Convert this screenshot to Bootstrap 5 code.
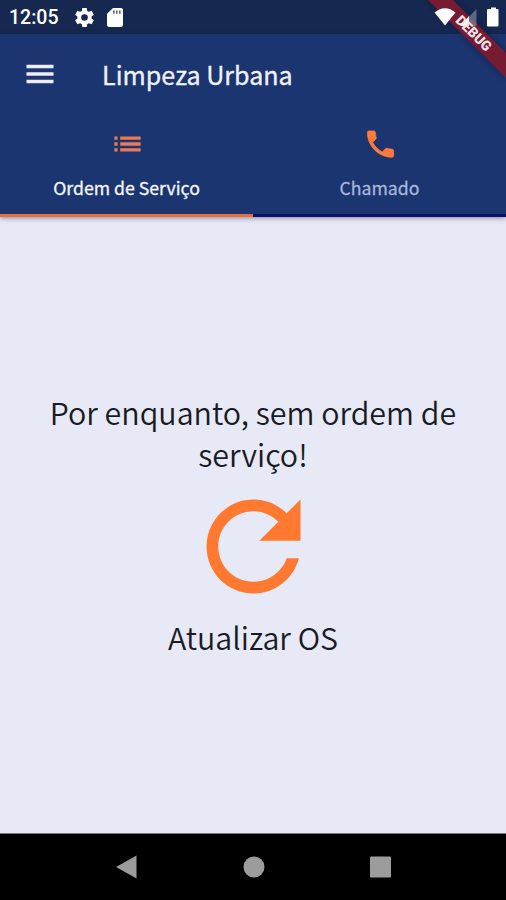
<!DOCTYPE html>
<html lang="pt-BR">
<head>
<meta charset="utf-8">
<meta name="viewport" content="width=device-width, initial-scale=1">
<title>Limpeza Urbana</title>
<link href="https://cdn.jsdelivr.net/npm/bootstrap@5.3.0/dist/css/bootstrap.min.css" rel="stylesheet">
<style>
body{font-family:"Noto Sans CJK SC","Noto Sans",sans-serif;background:#e7e9f6;color:#191b24;height:900px}
svg{display:block;flex:none}
.status-bar{height:34px;background:#162850;font-family:Roboto,sans-serif;padding-left:9px;padding-right:7px}
.clock{font-size:19.5px;font-weight:500;line-height:34px;width:66px;padding-top:2px}
.card-icon{margin-left:13px}
.app-head{background:#1b3570;height:182px;box-shadow:0 2px 5px rgba(30,35,70,.5);z-index:1}
.app-bar{height:80px;padding-left:22px}
.app-title{font-size:25.1px;font-weight:400;line-height:36px;margin-left:44px;padding-bottom:1px;color:#f0f2fc;-webkit-text-stroke:.3px #f0f2fc}
.tab-item{height:103px;color:#a9b5d9;font-size:17.7px;line-height:26px;border-bottom:3px solid #10106a;padding-top:12px;font-weight:400;-webkit-text-stroke:.3px currentColor}
.tab-item.current{color:#f4f5fe;border-bottom-color:#e97032}
.tab-item svg{margin-left:1px}
.tab-item span{margin-top:13px}
.notice{font-size:30.4px;line-height:42px;font-weight:350}
.content-area{padding-top:175px}
.refresh-icon{margin-top:1px;margin-bottom:-1px}
.nav-keys{height:67px;background:#000;border-top:1px solid #777;padding:0 61.500px}
.debug-ribbon{top:0;right:0;width:86px;height:86px;z-index:3}
</style>
</head>
<body class="d-flex flex-column overflow-hidden position-relative">
<div class="status-bar d-flex align-items-center text-white">
  <div class="clock">12:05</div>
  <svg width="19" height="19" viewBox="2 2 20 20" fill="#fff"><path d="M19.43 12.98c.04-.32.07-.64.07-.98s-.03-.66-.07-.98l2.11-1.65c.19-.15.24-.42.12-.64l-2-3.46c-.12-.22-.39-.3-.61-.22l-2.49 1c-.52-.4-1.08-.73-1.69-.98l-.38-2.65C14.46 2.18 14.25 2 14 2h-4c-.25 0-.46.18-.49.42l-.38 2.65c-.61.25-1.17.59-1.69.98l-2.49-1c-.23-.09-.49 0-.61.22l-2 3.46c-.13.22-.07.49.12.64l2.11 1.65c-.04.32-.07.65-.07.98s.03.66.07.98l-2.11 1.65c-.19.15-.24.42-.12.64l2 3.46c.12.22.39.3.61.22l2.49-1c.52.4 1.08.73 1.69.98l.38 2.65c.03.24.24.42.49.42h4c.25 0 .46-.18.49-.42l.38-2.65c.61-.25 1.17-.59 1.69-.98l2.49 1c.23.09.49 0 .61-.22l2-3.46c.12-.22.07-.49-.12-.64zM12 15.5A3.5 3.5 0 1 1 12 8.500a3.500 3.500 0 0 1 0 7z"/></svg>
  <svg class="card-icon" width="16" height="19" viewBox="4 2 16 20" preserveAspectRatio="none" fill="#fff"><path d="M18 2h-8L4 8v12c0 1.100.9 2 2 2h12c1.100 0 2-.9 2-2V4c0-1.100-.9-2-2-2z"/><path d="M10 4.500h1.600v3.500H10zM13 4.500h1.600v3.500H13zM16 4.500h1.600v3.500H16z" fill="#586583"/></svg>
</div>
<header class="app-head position-relative">
  <div class="app-bar d-flex align-items-center">
    <svg width="36" height="36" viewBox="0 0 24 24" fill="#eeecf8"><path d="M3 18.200h18v-2.400H3zM3 13.200h18v-2.400H3zM3 5.800v2.400h18V5.800z"/></svg>
    <div class="app-title">Limpeza Urbana</div>
  </div>
  <div class="row g-0 text-center">
    <div class="col-6 tab-item current d-flex flex-column align-items-center">
      <svg width="35" height="35" viewBox="0 0 24 24" fill="#e87c55"><path d="M3 13.500h2.200v-2.300H3zM3 17.500h2.200v-2.300H3zM3 9.500h2.200V7.200H3zM7 13.500h14v-2.300H7zM7 17.500h14v-2.300H7zM7 7.200v2.300h14V7.200z"/></svg>
      <span>Ordem de Serviço</span>
    </div>
    <div class="col-6 tab-item d-flex flex-column align-items-center">
      <svg width="35" height="35" viewBox="0 -.4 24 24" fill="#ff793b"><path d="M6.620 10.790c1.440 2.830 3.760 5.140 6.590 6.590l2.200-2.200c.27-.27.67-.36 1.020-.24 1.120.37 2.330.57 3.570.57.55 0 1 .45 1 1V20c0 .55-.45 1-1 1-9.390 0-17-7.610-17-17 0-.55.45-1 1-1h3.500c.55 0 1 .45 1 1 0 1.250.2 2.450.57 3.570.11.35.03.74-.25 1.020z" stroke="#ff793b" stroke-width=".5"/></svg>
      <span>Chamado</span>
    </div>
  </div>
</header>
<main class="content-area flex-grow-1 d-flex flex-column align-items-center text-center">
  <div class="notice">Por enquanto, sem ordem de<br>serviço!</div>
  <svg class="refresh-icon" width="141" height="141" viewBox="0 0 24 24" fill="#ff7930"><path d="M17.650 6.350C16.200 4.900 14.210 4 12 4c-4.420 0-7.990 3.580-7.990 8s3.570 8 7.990 8c3.730 0 6.840-2.550 7.730-6h-2.080c-.82 2.330-3.040 4-5.650 4-3.310 0-6-2.690-6-6s2.690-6 6-6c1.660 0 3.140.69 4.220 1.780L13 11h7V4z"/></svg>
  <div class="notice">Atualizar OS</div>
</main>
<nav class="nav-keys d-flex align-items-center">
  <svg width="383" height="24" viewBox="0 0 383 24" fill="#9c9c9c"><path d="M74.500.5v23L54 12z"/><circle cx="192" cy="12" r="10.500"/><rect x="308" y="1.500" width="21" height="21" rx="1"/></svg>
</nav>
<svg class="debug-ribbon position-absolute" viewBox="420 0 86 86">
  <defs><filter id="ribbonShade" x="-20%" y="-20%" width="140%" height="140%"><feGaussianBlur stdDeviation="3"/></filter></defs>
  <path d="M428 0h26l52 52v26z" fill="#0a1230" opacity=".5" filter="url(#ribbonShade)"/>
  <path d="M428 0h25l53 53v25z" fill="#761b32"/>
  <path d="M434.500 12.500q10.500-8.500 21 0L445 25.500z" fill="#fff"/>
  <path d="M476.500 9v17H460z" fill="#8b93ad" opacity=".6"/>
  <path d="M469 16V26h-9z" fill="#fff"/>
  <path d="M489 9h2V7.500h5V9h1.500q1 0 1 1v15.500q0 1-1 1h-9.500q-1 0-1-1V10q0-1 1-1z" fill="#fff"/>
  <text transform="translate(473.500 33.500) rotate(45)" text-anchor="middle" y="4.500" font-family="Roboto,sans-serif" font-weight="900" font-size="14" fill="#eee3e8" textLength="44" lengthAdjust="spacingAndGlyphs">DEBUG</text>
</svg>
<script src="https://cdn.jsdelivr.net/npm/bootstrap@5.3.0/dist/js/bootstrap.bundle.min.js"></script>
</body>
</html>
